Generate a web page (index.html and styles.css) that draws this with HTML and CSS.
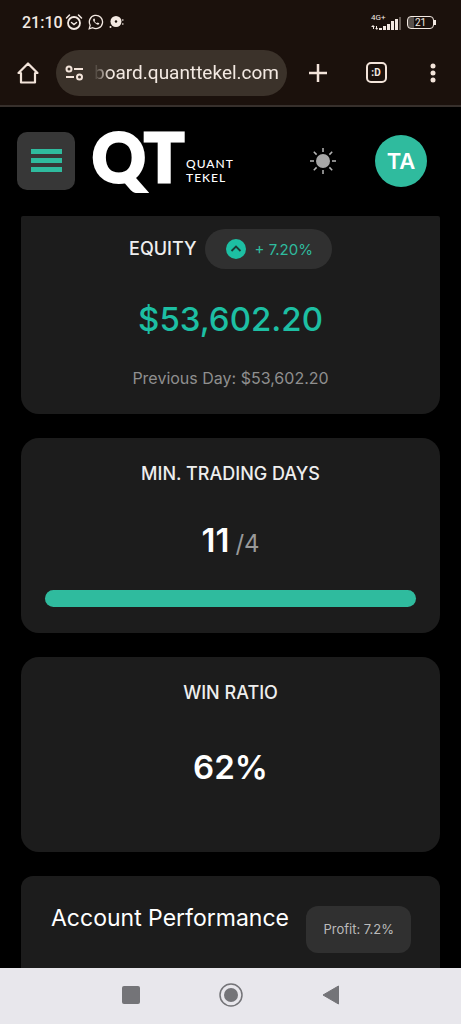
FILE: index.html
```html
<!DOCTYPE html>
<html lang="en">
<head>
    <meta charset="UTF-8">
    <meta name="viewport" content="width=device-width, initial-scale=1.0">
    <title>Quant Tekel - Dashboard</title>
    <link rel="stylesheet" href="styles.css">
</head>
<body>
    <div class="browser">
        <div class="status-bar">
            <span class="clock">21:10</span>
            <svg class="status-icon" width="18" height="18" viewBox="0 0 18 18" fill="none" stroke="#f3e9e2" stroke-width="1.800">
                <circle cx="9" cy="10" r="6"/>
                <path d="M1.500 5 4.500 2M16.500 5 13.500 2M6.500 9.500l2.500 2 2.500-2" stroke-width="1.500" stroke-linecap="round"/>
            </svg>
            <svg class="status-icon wide" width="16" height="16" viewBox="0 0 16 16" fill="none" stroke="#f3e9e2" stroke-width="1.300">
                <path d="M1.200 14.800l1-3.600a6.600 6.600 0 1 1 2.500 2.500z"/>
                <path d="M5.500 4.700c-.8.8-.5 2.200 1 3.900 1.600 1.700 3.400 2.600 4.500 1.700l.3-1-1.700-.9-.8.8c-1-.3-2-1.300-2.300-2.200l.7-.8-.7-1.700z" fill="#f3e9e2" stroke="none"/>
            </svg>
            <svg class="status-icon wide" width="15" height="14" viewBox="0 0 15 14" fill="#f3e9e2">
                <circle cx="7" cy="6.500" r="5.500"/>
                <circle cx="7" cy="6.500" r="1.200" fill="#1b110c"/>
                <circle cx="1.500" cy="12" r="1"/>
                <path d="M13 4h1.500v2H13zM13 8h1.500v2H13z" opacity=".6"/>
            </svg>
            <div class="network">
                <span class="network-type">4G+</span>
                <svg width="30" height="14" viewBox="0 0 30 14" fill="#f3e9e2">
                    <path d="M2 9l2 2H3v2H2v-2H0zM6 14l-2-2h1v-2h1v2h1z"/>
                    <path d="M8 12h3v2H8zM12 10h3v4h-3zM16 8h3v6h-3zM20 5h3v9h-3zM24 3h3v11h-3z"/>
                    <path d="M28 1h2v13h-2z" opacity=".35"/>
                </svg>
            </div>
            <div class="battery">21</div>
        </div>
        <div class="toolbar">
            <button class="tool" aria-label="Home">
                <svg width="24" height="24" viewBox="0 0 24 24" fill="none" stroke="#f3e4da" stroke-width="2.200" stroke-linejoin="round">
                    <path d="M2.500 12 12 2.500l9.500 9.500H19v9.500H5V12z"/>
                </svg>
            </button>
            <button class="address">
                <svg width="19" height="16" viewBox="0 0 19 16" fill="none" stroke="#f3e4da" stroke-width="2">
                    <circle cx="4" cy="4" r="2.500"/>
                    <circle cx="14.500" cy="12" r="2.500"/>
                    <path d="M9 4h9M1 12h8"/>
                </svg>
                <span class="url">board.quanttekel.com</span>
            </button>
            <button class="tool" aria-label="New tab">
                <svg width="20" height="20" viewBox="0 0 20 20" stroke="#f3e4da" stroke-width="2.500">
                    <path d="M10 1v18M1 10h18"/>
                </svg>
            </button>
            <button class="tool" aria-label="Tabs"><span class="tabs">:D</span></button>
            <button class="tool" aria-label="Menu">
                <svg width="6" height="20" viewBox="0 0 6 20" fill="#f3e4da">
                    <circle cx="3" cy="3" r="2.500"/>
                    <circle cx="3" cy="10" r="2.500"/>
                    <circle cx="3" cy="17" r="2.500"/>
                </svg>
            </button>
        </div>
    </div>

    <header class="header">
        <button class="menu-btn" aria-label="Open menu">
            <span></span>
            <span></span>
            <span></span>
        </button>
        <a href="#" class="logo">
            <span class="logo-mark">QT</span>
            <span class="logo-name">QUANT<br>TEKEL</span>
        </a>
        <button class="theme-btn" aria-label="Toggle theme">
            <svg width="28" height="28" viewBox="0 0 28 28" stroke="#b5b5b5" stroke-width="1.500">
                <circle cx="14" cy="14" r="7" fill="#a6a6a6" stroke="none"/>
                <path d="M14 1v4M14 23v4M1 14h4M23 14h4M4.800 4.800l2.800 2.800M20.400 20.400l2.800 2.800M4.800 23.200l2.800-2.800M20.400 7.600l2.800-2.800"/>
            </svg>
        </button>
        <button class="avatar">TA</button>
    </header>

    <main class="content">
        <section class="card card-equity">
            <div class="card-head">
                <h2>EQUITY</h2>
                <span class="badge">
                    <svg width="20" height="20" viewBox="0 0 20 20" fill="none">
                        <circle cx="10" cy="10" r="10" fill="#1dbfa3"/>
                        <path d="M5.500 12 10 7.500l4.500 4.500" stroke="#1c3a35" stroke-width="1.800"/>
                    </svg>
                    + 7.20%
                </span>
            </div>
            <p class="value value-up">$53,602.20</p>
            <p class="note">Previous Day: $53,602.20</p>
        </section>

        <section class="card">
            <h2>MIN. TRADING DAYS</h2>
            <p class="value days">11<span>/4</span></p>
            <div class="progress"><div class="progress-bar" style="width: 100%"></div></div>
        </section>

        <section class="card">
            <h2>WIN RATIO</h2>
            <p class="value">62%</p>
        </section>

        <section class="card card-performance">
            <h2>Account Performance</h2>
            <span class="profit">Profit: 7.2%</span>
        </section>
    </main>

    <nav class="system-nav">
        <button aria-label="Recent apps">
            <svg width="24" height="24" viewBox="0 0 24 24" fill="#747478">
                <rect x="3" y="3" width="18" height="18" rx="2"/>
            </svg>
        </button>
        <button aria-label="Home screen">
            <svg width="24" height="24" viewBox="0 0 24 24">
                <circle cx="12" cy="12" r="11" fill="none" stroke="#747478" stroke-width="1.500"/>
                <circle cx="12" cy="12" r="7" fill="#747478"/>
            </svg>
        </button>
        <button aria-label="Back">
            <svg width="24" height="24" viewBox="0 0 24 24" fill="#747478" stroke="#747478" stroke-linejoin="round">
                <path d="M4 12 19.500 3v18z"/>
            </svg>
        </button>
    </nav>
</body>
</html>
```
FILE: styles.css
```css
* {
    margin: 0;
    padding: 0;
    box-sizing: border-box;
}

body {
    display: flex;
    flex-direction: column;
    height: 100vh;
    font-family: Inter, Roboto, sans-serif;
    background: #000;
    color: #fff;
    overflow: hidden;
}

button {
    border: none;
    background: none;
    color: inherit;
    font: inherit;
    cursor: pointer;
}

svg {
    display: block;
    flex-shrink: 0;
}

/* Phone status bar and browser toolbar */
.browser {
    flex-shrink: 0;
    background: #1b110c;
    color: #f3e9e2;
    font-family: Roboto, sans-serif;
    border-bottom: 2px solid #37302c;
}

.status-bar {
    display: flex;
    align-items: center;
    height: 44px;
    padding: 0 27px 0 22px;
}

.clock {
    font-size: 16px;
    font-weight: 500;
}

.status-icon {
    margin-left: 2px;
}

.status-icon.wide {
    margin-left: 5px;
}

.network {
    margin-left: auto;
    display: grid;
}

.network > * {
    grid-area: 1 / 1;
    align-self: end;
}

.network-type {
    font-size: 8px;
    line-height: 8px;
    padding-bottom: 8px;
}

.battery {
    position: relative;
    width: 27px;
    height: 13px;
    margin-left: 6px;
    border: 1px solid #f3e9e2;
    border-radius: 4px;
    background: linear-gradient(90deg, #574f4a 24%, transparent 24%);
    font-size: 10px;
    line-height: 11px;
    text-align: center;
}

.battery::after {
    content: "";
    position: absolute;
    top: 3px;
    right: -3px;
    width: 2px;
    height: 5px;
    background: #f3e9e2;
}

.toolbar {
    display: flex;
    align-items: center;
    height: 61px;
    padding-bottom: 4px;
}

.tool {
    display: flex;
    align-items: center;
    justify-content: center;
    width: 58px;
    height: 46px;
}

.tool:first-child,
.tool:last-child {
    width: 56px;
}

.address {
    flex: 1;
    display: flex;
    align-items: center;
    gap: 10px;
    min-width: 0;
    height: 46px;
    margin-right: 2px;
    padding: 0 9px;
    border-radius: 23px;
    background: #3b322a;
}

.url {
    font-size: 19px;
    white-space: nowrap;
    -webkit-mask-image: linear-gradient(90deg, transparent, #000 16px);
    mask-image: linear-gradient(90deg, transparent, #000 16px);
}

.tabs {
    width: 21px;
    height: 21px;
    border: 2px solid #f3e4da;
    border-radius: 5px;
    font-size: 10px;
    font-weight: 700;
    line-height: 17px;
}

/* Site header */
.header {
    display: flex;
    align-items: center;
    flex-shrink: 0;
    height: 109px;
    padding: 0 34px 2px 17px;
}

.menu-btn {
    display: flex;
    flex-direction: column;
    align-items: center;
    justify-content: center;
    gap: 4px;
    width: 58px;
    height: 58px;
    border-radius: 10px;
    background: #373737;
}

.menu-btn span {
    width: 31px;
    height: 5px;
    background: #2fbb9e;
}

.logo {
    display: flex;
    align-items: center;
    margin-left: 17px;
    color: #fff;
    text-decoration: none;
}

.logo-mark {
    padding-bottom: 8px;
    font-family: Lato, sans-serif;
    font-size: 66px;
    font-weight: 900;
    line-height: 66px;
    -webkit-text-stroke: 3px #fff;
}

.logo-name {
    padding-top: 20px;
    margin-left: 2px;
    font-family: Lato, sans-serif;
    font-size: 12px;
    font-weight: 500;
    line-height: 14px;
    letter-spacing: 1px;
}

.theme-btn {
    margin-left: auto;
}

.avatar {
    width: 52px;
    height: 52px;
    margin-left: 38px;
    border-radius: 50%;
    background: #2fbb9e;
    font-size: 22px;
    font-weight: 600;
}

/* Dashboard cards */
.content {
    flex: 1;
    display: flex;
    flex-direction: column;
    gap: 24px;
    min-height: 0;
    padding: 0 21px;
    overflow: hidden;
}

.card {
    flex-shrink: 0;
    min-height: 195px;
    padding: 24px;
    border-radius: 18px;
    background: #1c1c1c;
    text-align: center;
}

.card h2 {
    color: #eee;
    font-size: 18px;
    font-weight: 500;
    line-height: 24px;
}

.card-equity {
    padding-top: 13px;
    border-radius: 2px 2px 18px 18px;
}

.card-head {
    display: flex;
    align-items: center;
    justify-content: center;
    gap: 8px;
}

.badge {
    display: flex;
    align-items: center;
    gap: 9px;
    height: 40px;
    padding: 0 19px 0 21px;
    border-radius: 20px;
    background: #303030;
    color: #2fbb9e;
    font-size: 15px;
}

.value {
    margin-top: 40px;
    font-size: 33px;
    font-weight: 600;
    line-height: 44px;
}

.value-up {
    margin-top: 28px;
    color: #1dbfa3;
    font-weight: 500;
}

.note {
    margin-top: 25px;
    color: #8f8f8f;
    font-size: 16px;
    line-height: 24px;
}

.days {
    display: flex;
    align-items: baseline;
    justify-content: center;
    gap: 6px;
    margin-top: 32px;
}

.days span {
    color: #999;
    font-size: 24px;
    font-weight: 400;
    line-height: 24px;
}

.progress {
    margin-top: 28px;
    height: 17px;
    border-radius: 9px;
    background: #303030;
}

.progress-bar {
    height: 100%;
    border-radius: 9px;
    background: #2fbb9e;
}

.card-performance {
    display: flex;
    align-items: flex-start;
    justify-content: space-between;
    padding: 30px 29px 30px 30px;
    border-radius: 12px;
}

.card-performance h2 {
    color: #fff;
    font-size: 23px;
    font-weight: 400;
}

.profit {
    padding: 12px 17px;
    border-radius: 12px;
    background: #303030;
    color: #bbb;
    font-size: 13px;
    line-height: 23px;
    white-space: nowrap;
}

/* Android navigation bar */
.system-nav {
    display: flex;
    align-items: center;
    justify-content: center;
    gap: 76px;
    flex-shrink: 0;
    height: 56px;
    padding-bottom: 2px;
    background: #e8e7ec;
}
```
